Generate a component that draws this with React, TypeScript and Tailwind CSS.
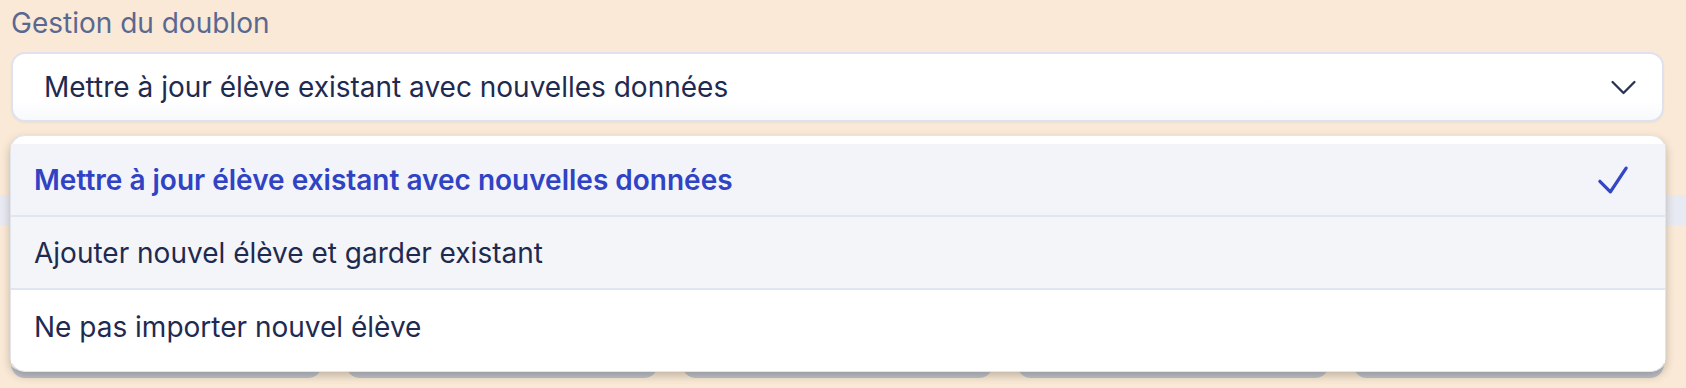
import { useState } from 'react';

const options = [
  'Mettre à jour élève existant avec nouvelles données',
  'Ajouter nouvel élève et garder existant',
  'Ne pas importer nouvel élève',
];

function ChevronDown() {
  return (
    <svg viewBox="0 0 24 24" fill="none" stroke="currentColor" strokeWidth={1.6} className="w-[35px] h-[35px]">
      <path strokeLinecap="round" strokeLinejoin="round" d="m19.5 8.25-7.5 7.5-7.5-7.5" />
    </svg>
  );
}

function Check() {
  return (
    <svg viewBox="0 0 24 24" fill="none" stroke="currentColor" strokeWidth={1.9} className="w-[42px] h-[42px]">
      <path strokeLinecap="round" strokeLinejoin="round" d="m4.5 12.75 6 6 9-13.5" />
    </svg>
  );
}

export default function App() {
  const [selected, setSelected] = useState(0);
  const [hovered] = useState(1);

  return (
    <div className="relative w-full h-[388px] overflow-hidden bg-[#f9e9d6] pl-[11px] pr-[22px] pt-[3px] font-['Inter','Noto_Sans',sans-serif]">
      <label className="block text-[28px] leading-[40px] text-[#5a6891] mb-[9px]">Gestion du doublon</label>

      {/* Select trigger */}
      <button className="w-full h-[70px] flex items-center justify-between pl-[31px] pr-[21px] rounded-[14px] border-2 border-[#dfe2ee] bg-gradient-to-b from-white from-70% to-[#f8f9fc] text-left shadow-[0_1px_2px_rgba(30,40,80,0.05)]">
        <span className="text-[28px] text-[#1f2a50]">{options[selected]}</span>
        <span className="text-[#2a3152]">
          <ChevronDown />
        </span>
      </button>

      {/* Content behind the menu */}
      <div className="mt-[73px] -ml-[11px] -mr-[22px] h-[30px] bg-[#e7eaf2]" />
      <div className="mt-[15px] grid grid-cols-5 gap-6">
        {[0, 1, 2, 3, 4].map((i) => (
          <div key={i} className="h-[138px] rounded-[14px] bg-white border-b-[7px] border-[#bfc3ce]" />
        ))}
      </div>

      {/* Options menu */}
      <div className="absolute top-[135px] left-[10px] right-[20px] z-10 rounded-[15px] bg-white border border-[#e3e5ec] py-2 shadow-[0_4px_8px_rgba(70,60,40,0.3)]">
        {options.map((opt, i) => (
          <div
            key={opt}
            onClick={() => setSelected(i)}
            className={
              'h-[73px] flex items-center justify-between pl-[23px] pr-[31px] cursor-pointer ' +
              (i < options.length - 1 ? 'border-b-2 border-[#e0e6f1] ' : '') +
              (i === selected ? 'bg-[#f2f4fa] ' : i === hovered ? 'bg-[#f4f5f8] ' : 'bg-white ')
            }
          >
            <span
              className={
                'text-[28px] ' +
                (i === selected ? 'font-semibold text-[#3043c4]' : 'text-[#1f2a50]')
              }
            >
              {opt}
            </span>
            {i === selected && (
              <span className="text-[#3346c8]">
                <Check />
              </span>
            )}
          </div>
        ))}
      </div>
    </div>
  );
}
